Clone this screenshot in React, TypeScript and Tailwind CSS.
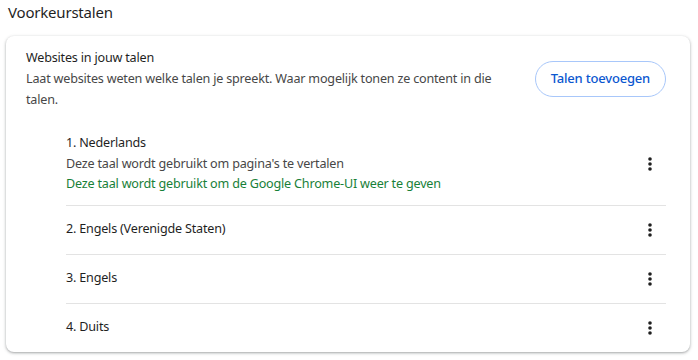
interface Taal {
  naam: string;
  regels?: { tekst: string; groen?: boolean }[];
}

const talen: Taal[] = [
  {
    naam: "1. Nederlands",
    regels: [
      { tekst: "Deze taal wordt gebruikt om pagina's te vertalen" },
      { tekst: "Deze taal wordt gebruikt om de Google Chrome-UI weer te geven", groen: true },
    ],
  },
  { naam: "2. Engels (Verenigde Staten)" },
  { naam: "3. Engels" },
  { naam: "4. Duits" },
];

function Kebab() {
  return (
    <svg width="4" height="14" viewBox="0 0 4 14" className="text-[#1f1f1f]">
      <circle cx="2" cy="2" r="1.8" fill="currentColor" />
      <circle cx="2" cy="7" r="1.8" fill="currentColor" />
      <circle cx="2" cy="12" r="1.8" fill="currentColor" />
    </svg>
  );
}

export default function App() {
  return (
    <div className="w-[698px] h-[360px] bg-white font-['Segoe_UI','Noto_Sans',sans-serif] text-[12.6px] tracking-[-0.2px] text-[#1f1f1f]">
      <h2 className="pl-[8px] pt-[2px] h-[36px] text-[15px] leading-[20px] font-normal">Voorkeurstalen</h2>

      <div className="mx-[6px] w-[684px] rounded-[8px] bg-white shadow-[0_1px_2px_rgba(60,64,67,0.3),0_1px_3px_1px_rgba(60,64,67,0.15)]">
        {/* koptekst */}
        <div className="flex items-center pl-[20px] pr-[24px] pt-[11px]">
          <div className="flex-1 pr-[28px] leading-[21px]">
            <div>Websites in jouw talen</div>
            <div className="text-[#474747]">
              Laat websites weten welke talen je spreekt. Waar mogelijk tonen ze content in die talen.
            </div>
          </div>
          <button className="h-[36px] px-[15px] rounded-full border border-[#a8c7fa] text-[#0b57d0] font-medium text-[13px] tracking-[-0.2px]">
            Talen toevoegen
          </button>
        </div>

        {/* lijst */}
        <div className="mt-[10px] pl-[60px] pr-[24px]">
          {talen.map((t, i) => (
            <div
              key={t.naam}
              className={`flex items-center ${i > 0 ? "border-t border-[#e3e3e3] h-[49px]" : "pt-[13px] pb-[10px]"}`}
            >
              <div className="flex-1 leading-[20.5px]">
                <div>{t.naam}</div>
                {t.regels?.map((r) => (
                  <div key={r.tekst} className={r.groen ? "text-[#188038]" : "text-[#474747]"}>
                    {r.tekst}
                  </div>
                ))}
              </div>
              <div className="w-[36px] h-[36px] flex items-center justify-center mr-[-2px]">
                <Kebab />
              </div>
            </div>
          ))}
        </div>
      </div>
    </div>
  );
}
